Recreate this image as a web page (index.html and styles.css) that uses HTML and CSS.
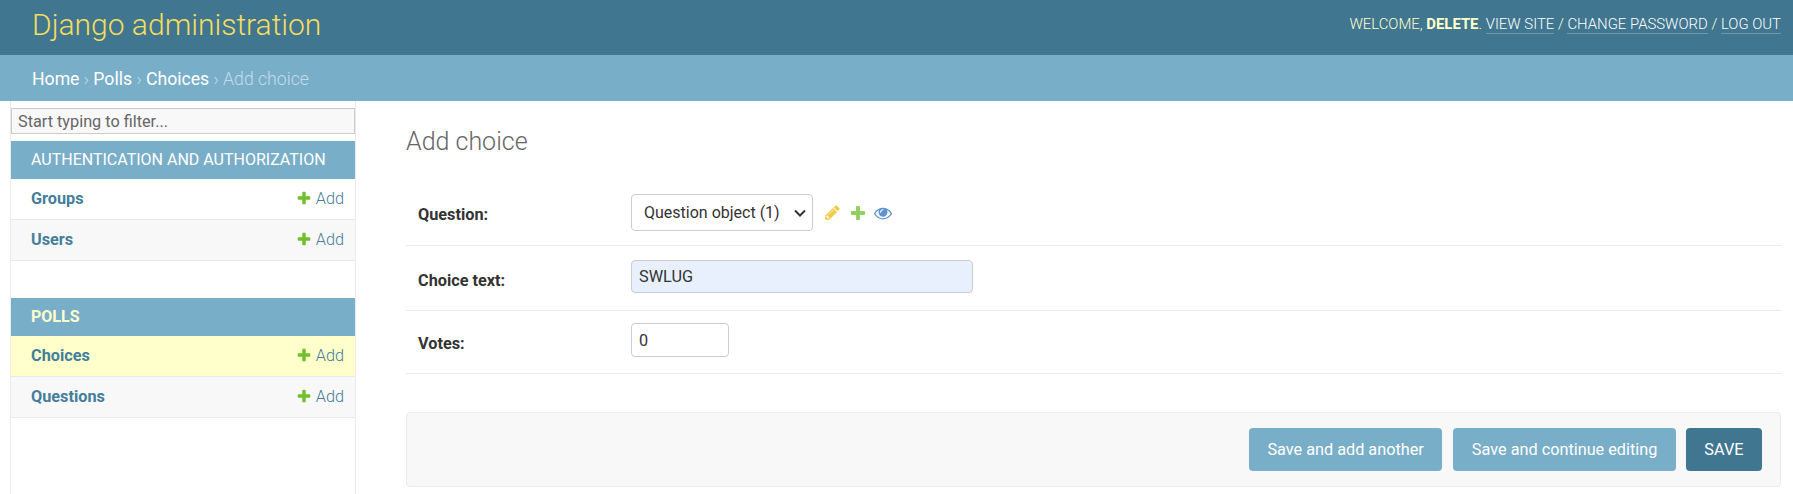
FILE: index.html
```html
<!DOCTYPE html>
<html lang="en">
<head>
<meta charset="utf-8">
<title>Add choice | Django site admin</title>
<link rel="stylesheet" href="styles.css">
</head>
<body>
<svg class="defs" width="0" height="0"><symbol id="plus" viewBox="0 0 1792 1792"><path fill="#70bf2b" d="M1600 796v192q0 40-28 68t-68 28h-416v416q0 40-28 68t-68 28h-192q-40 0-68-28t-28-68v-416h-416q-40 0-68-28t-28-68v-192q0-40 28-68t68-28h416v-416q0-40 28-68t68-28h192q40 0 68 28t28 68v416h416q40 0 68 28t28 68z"/></symbol></svg>
<header class="header">
  <h1 class="branding">Django administration</h1>
  <div class="user-tools">WELCOME, <strong>DELETE</strong>. <a href="#">VIEW SITE</a> / <a href="#">CHANGE PASSWORD</a> / <a href="#">LOG OUT</a></div>
</header>
<nav class="breadcrumbs"><a href="#">Home</a> › <a href="#">Polls</a> › <a href="#">Choices</a> › Add choice</nav>
<div class="page">
  <aside class="sidebar">
    <input class="filter" type="text" placeholder="Start typing to filter...">
    <section class="module">
      <h2 class="caption">AUTHENTICATION AND AUTHORIZATION</h2>
      <div class="row"><a class="model" href="#">Groups</a><a class="add" href="#"><svg class="icon"><use href="#plus"/></svg>Add</a></div>
      <div class="row alt"><a class="model" href="#">Users</a><a class="add" href="#"><svg class="icon"><use href="#plus"/></svg>Add</a></div>
    </section>
    <section class="module">
      <h2 class="caption current">POLLS</h2>
      <div class="row selected"><a class="model" href="#">Choices</a><a class="add" href="#"><svg class="icon"><use href="#plus"/></svg>Add</a></div>
      <div class="row alt"><a class="model" href="#">Questions</a><a class="add" href="#"><svg class="icon"><use href="#plus"/></svg>Add</a></div>
    </section>
  </aside>
  <main class="content">
    <h1 class="title">Add choice</h1>
    <form class="form">
      <div class="form-row">
        <label class="label">Question:</label>
        <select class="select"><option>Question object (1)</option></select>
        <span class="related">
          <svg class="rel-icon pencil" viewBox="0 0 1792 1792"><path fill="#efb80b" d="M491 1536l91-91-235-235-91 91v107h128v128h107zm523-928q0-22-22-22-10 0-17 7l-542 542q-7 7-7 17 0 22 22 22 10 0 17-7l542-542q7-7 7-17zm-54-192l416 416-832 832h-416v-416zm683 96q0 53-37 90l-166 166-416-416 166-165q36-38 90-38 53 0 91 38l235 234q37 39 37 91z"/></svg>
          <svg class="rel-icon"><use href="#plus"/></svg>
          <svg class="rel-icon" viewBox="0 0 1792 1792"><path fill="#2b70bf" d="M1664 960q-152-236-381-353 61 104 61 225 0 185-131.5 316.5t-316.5 131.5-316.5-131.5-131.5-316.5q0-121 61-225-229 117-381 353 133 205 333.5 326.5t434.5 121.5 434.5-121.5 333.5-326.5zm-720-384q0-20-14-34t-34-14q-125 0-214.5 89.5t-89.5 214.5q0 20 14 34t34 14 34-14 14-34q0-86 61-147t147-61q20 0 34-14t14-34zm848 384q0 34-20 69-140 230-376.5 368.5t-499.5 138.5-499.5-139-376.5-368q-20-35-20-69t20-69q140-229 376.5-368t499.5-139 499.5 139 376.5 368q20 35 20 69z"/></svg>
        </span>
      </div>
      <div class="form-row">
        <label class="label">Choice text:</label>
        <input class="text-input autofilled" type="text" value="SWLUG">
      </div>
      <div class="form-row">
        <label class="label">Votes:</label>
        <input class="text-input number" type="text" value="0">
      </div>
      <div class="submit-row">
        <button class="btn" type="button">Save and add another</button>
        <button class="btn" type="button">Save and continue editing</button>
        <button class="btn default" type="button">SAVE</button>
      </div>
    </form>
  </main>
</div>
</body>
</html>
```
FILE: styles.css
```css
* { box-sizing: border-box; }
html, body { margin: 0; height: 494px; overflow: hidden; }
body { font-family: Roboto, "Liberation Sans", sans-serif; color: #333; background: #fff; font-size: 16px; }
a { text-decoration: none; }
.defs { display: block; height: 0; }

.header { height: 55px; background: #417690; display: flex; justify-content: space-between; padding: 0 12px 0 32px; color: #ffc; }
.branding { margin: 0; font-size: 30px; font-weight: 300; color: #f5dd5d; line-height: 50px; }
.user-tools { font-size: 14.9px; font-weight: 300; line-height: 48px; color: #ffc; }
.user-tools strong { font-weight: 700; }
.user-tools a { color: #fff; border-bottom: 1px solid rgba(255,255,255,.25); }

.breadcrumbs { height: 46px; background: #79aec8; padding-left: 32px; line-height: 48px; font-size: 17.65px; font-weight: 300; color: #c4dce8; }
.breadcrumbs a { color: #fff; font-weight: 400; }

.page { display: flex; height: 393px; }
.sidebar { flex: 0 0 346px; margin-left: 10px; border-left: 1px solid #eaeaea; border-right: 1px solid #eaeaea; padding-top: 7px; }
.filter { display: block; width: 100%; height: 26px; margin-bottom: 7px; border: 1.5px solid #ccc; background: #f8f8f8; padding: 0 6px; font: 400 16.25px Roboto, sans-serif; color: #333; outline: 0; }
.filter::placeholder { color: #666; opacity: 1; }
.module { margin-bottom: 37px; }
.caption { margin: 0; height: 38px; background: #79aec8; color: #fff; font-size: 16px; font-weight: 400; line-height: 38px; padding-left: 20px; }
.caption.current { color: #ffc; font-weight: 700; }
.row { height: 41px; display: flex; justify-content: space-between; align-items: center; padding: 0 11px 2px 20px; border-bottom: 1px solid #eaeaea; background: #fff; }
.row.alt { background: #f8f8f8; }
.row.selected { background: #ffc; }
.model { font-size: 16.25px; font-weight: 700; color: #447e9b; }
.add { font-size: 16.25px; font-weight: 300; color: #447e9b; display: flex; align-items: center; gap: 4px; }
.icon { width: 16px; height: 16px; }

.content { flex: 1; padding: 0 12px 0 50px; min-width: 0; }
.title { margin: 25px 0 0; font-size: 25px; font-weight: 300; color: #666; line-height: 32px; }
.form { margin-top: 22px; }
.form-row { display: flex; align-items: center; border-bottom: 1px solid #eaeaea; height: 65px; padding-left: 12px; }
.form-row:first-child { height: 66px; }
.form-row:nth-child(3) { height: 63px; }
.label { flex: 0 0 213px; margin-top: 4px; font-size: 16.25px; font-weight: 700; color: #333; }
.form-row:nth-child(3) .label { margin-top: 2px; }
.select { appearance: none; width: 182px; height: 37px; border: 1px solid #ccc; border-radius: 4px; padding: 0 8px 0 12px; font: 400 16px Roboto, sans-serif; color: #333; background: #fff url("data:image/svg+xml,%3Csvg xmlns='http://www.w3.org/2000/svg' width='12' height='8'%3E%3Cpath d='M1 1.5l5 5 5-5' fill='none' stroke='%23333' stroke-width='2'/%3E%3C/svg%3E") no-repeat right 6px center; }
.related { display: flex; align-items: center; gap: 7.5px; margin-left: 11px; }
.rel-icon { width: 18px; height: 18px; opacity: .75; }
.rel-icon.pencil { width: 17px; height: 17px; }
.text-input { width: 342px; height: 33px; margin-bottom: 4px; border: 1px solid #ccc; border-radius: 4px; padding: 0 7px; font: 400 16.25px Roboto, sans-serif; color: #333; }
.text-input.autofilled { background: #e8f0fe; }
.text-input.number { width: 98px; height: 34px; }
.submit-row { margin-top: 38px; height: 75px; display: flex; justify-content: flex-end; align-items: center; gap: 11px; padding-right: 18px; background: #f8f8f8; border: 1px solid #eaeaea; border-radius: 4px; }
.btn { height: 43px; border: 0; border-radius: 4px; background: #79aec8; color: #fff; font: 400 16.25px Roboto, sans-serif; padding: 0 18.5px; }
.btn.default { background: #417690; margin-left: -1px; }
```
